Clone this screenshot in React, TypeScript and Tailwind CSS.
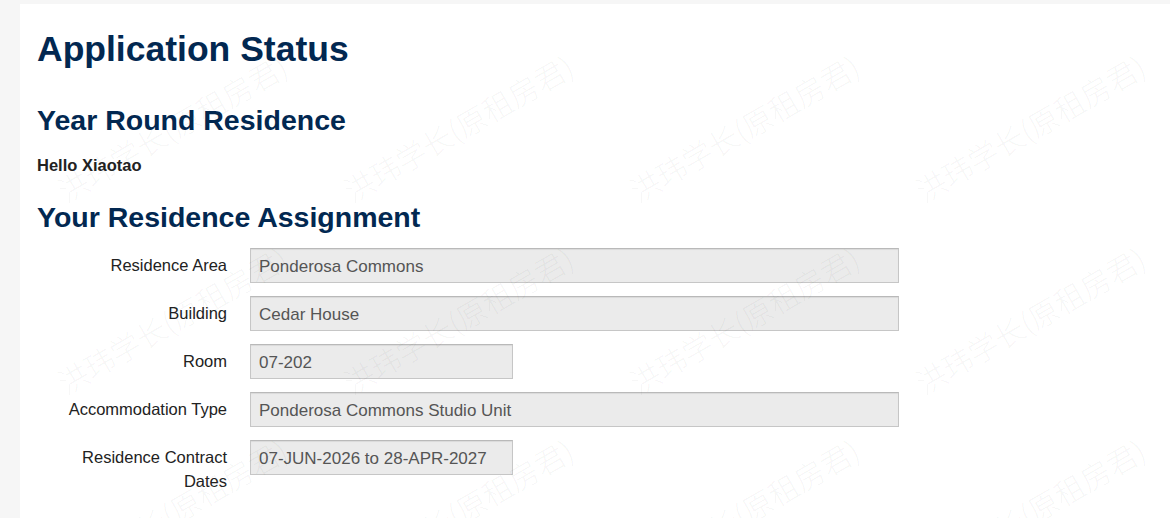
import React from 'react';

const rows = [
  { label: 'Residence Area', value: 'Ponderosa Commons', wide: true },
  { label: 'Building', value: 'Cedar House', wide: true },
  { label: 'Room', value: '07-202', wide: false },
  { label: 'Accommodation Type', value: 'Ponderosa Commons Studio Unit', wide: true },
  { label: 'Residence Contract Dates', value: '07-JUN-2026 to 28-APR-2027', wide: false },
];

// faint repeated watermark over the page
const marks: { x: number; y: number }[] = [];
for (let r = 0; r < 3; r++) {
  for (let c = 0; c < 4; c++) {
    marks.push({ x: 172 + c * 286, y: 128 + r * 192 });
  }
}

const Watermark = () => (
  <div className="pointer-events-none absolute inset-0 overflow-hidden">
    {marks.map((m, i) => (
      <span
        key={i}
        className="absolute whitespace-nowrap text-[30px] font-light text-[rgba(0,0,0,0.045)] [font-family:'Noto_Sans_CJK_SC',sans-serif]"
        style={{ left: m.x, top: m.y, transform: 'translate(-50%, -50%) rotate(-30deg)' }}
      >
        洪玮学长(原租房君)
      </span>
    ))}
  </div>
);

const App = () => {
  return (
    <div className="relative min-h-[518px] bg-[#f6f6f6] pl-[20px] pt-[4px] flex [font-family:'Liberation_Sans',Arial,sans-serif]">
      <div className="flex-1 bg-white pl-[17px] pt-[26px] min-h-[514px]">
        <h1 className="text-[35.5px] leading-[39px] font-bold text-[#022851]">Application Status</h1>
        <h2 className="mt-[36px] text-[28.5px] leading-[31px] font-bold text-[#022851]">Year Round Residence</h2>
        <p className="mt-[18px] text-[16.5px] leading-[22px] font-bold text-[#222]">Hello Xiaotao</p>
        <h2 className="mt-[26px] text-[28.5px] leading-[31px] font-bold text-[#022851]">Your Residence Assignment</h2>

        <div className="mt-[15px] pl-[15px] flex flex-col gap-[13px]">
          {rows.map((row) => (
            <div key={row.label} className="flex items-start gap-[23px]">
              <label className="w-[175px] shrink-0 pt-[5px] text-right text-[16.5px] leading-[24px] text-[#222]">
                {row.label}
              </label>
              <div
                className={`${row.wide ? 'w-[649px]' : 'w-[263px]'} h-[35px] flex items-center border border-[#c6c6c6] border-t-[#b9b9b9] bg-[#ebebeb] px-[8px] pt-[3px] text-[17px] leading-[20px] text-[#555] shadow-[inset_0_1px_1px_rgba(0,0,0,0.075)]`}
              >
                {row.value}
              </div>
            </div>
          ))}
        </div>
      </div>
      <Watermark />
    </div>
  );
};

export default App;
